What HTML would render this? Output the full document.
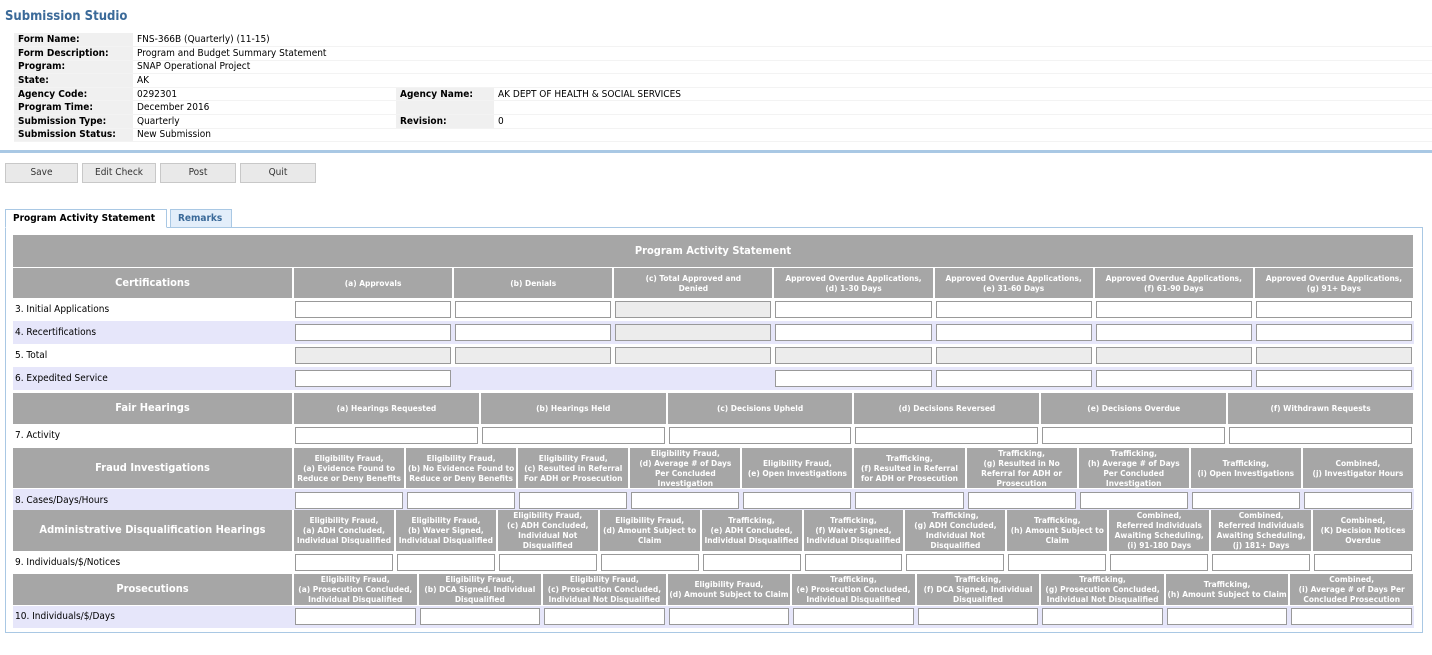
<!DOCTYPE html>
<html><head><meta charset="utf-8"><style>
*{box-sizing:border-box}
body{margin:0;width:1432px;height:655px;background:#fff;font-family:"DejaVu Sans Condensed","Liberation Sans",sans-serif;font-size:10px;color:#000;position:relative;overflow:hidden}
.title{position:absolute;left:5px;top:9px;font-size:13px;font-weight:bold;color:#3b6a99}
.info{position:absolute;left:14px;top:33px;border-collapse:collapse;table-layout:fixed;width:1418px}
.info td{height:13.6px;padding:0 4px;font-size:10px;border-bottom:1px solid #f3f3f3;white-space:nowrap;overflow:hidden}
.info td.l{background:#f0f0f0;font-weight:bold}
.rule{position:absolute;left:0;top:150px;width:1432px;height:3px;background:#a9c8e4}
.btn{position:absolute;top:163px;height:20px;background:#e9e9e9;border:1px solid #c8c8c8;font-size:10px;text-align:center;line-height:18px;color:#333}
.tab{position:absolute;top:209px;height:19px;font-weight:bold;font-size:10px;line-height:18px;padding:0 7px;white-space:nowrap}
.panel{position:absolute;left:5px;top:227px;width:1418px;height:406px;border:1px solid #a9c8e4}
table.s{position:absolute;left:13px;width:1402px;border-collapse:collapse;table-layout:fixed}
table.s th{background:#a6a6a6;color:#fff;font-weight:bold;font-size:8.3px;line-height:10px;border-right:2px solid #fff;border-bottom:1px solid #fff;padding:0 1px;text-align:center;overflow:hidden}
table.s th.big{font-size:11px}
table.s td{padding:0 1px;height:23px;border-right:2px solid transparent}
table.s td.lab{padding-left:2px;font-size:10px}
.lv td{background:#e6e6fa}
.i{height:17px;border:1px solid #999;background:#fff;width:100%}
.d{background:#ececec}
</style></head><body>
<div class="title">Submission Studio</div>
<table class="info">
<colgroup><col style="width:119px"><col style="width:263px"><col style="width:98px"><col></colgroup>
<tr><td class="l">Form Name:</td><td>FNS-366B (Quarterly) (11-15)</td><td></td><td></td></tr>
<tr><td class="l">Form Description:</td><td>Program and Budget Summary Statement</td><td></td><td></td></tr>
<tr><td class="l">Program:</td><td>SNAP Operational Project</td><td></td><td></td></tr>
<tr><td class="l">State:</td><td>AK</td><td></td><td></td></tr>
<tr><td class="l">Agency Code:</td><td>0292301</td><td class="l">Agency Name:</td><td>AK DEPT OF HEALTH &amp; SOCIAL SERVICES</td></tr>
<tr><td class="l">Program Time:</td><td>December 2016</td><td class="l"></td><td></td></tr>
<tr><td class="l">Submission Type:</td><td>Quarterly</td><td class="l">Revision:</td><td>0</td></tr>
<tr><td class="l">Submission Status:</td><td>New Submission</td><td></td><td></td></tr>
</table>
<div class="rule"></div>
<div class="btn" style="left:5px;width:73px">Save</div>
<div class="btn" style="left:82px;width:74px">Edit Check</div>
<div class="btn" style="left:160px;width:76px">Post</div>
<div class="btn" style="left:240px;width:76px">Quit</div>
<div class="panel"></div>
<div class="tab" style="left:5px;width:162px;background:#fff;border:1px solid #a9c8e4;border-bottom:1px solid #fff;z-index:2">Program Activity Statement</div>
<div class="tab" style="left:170px;width:62px;background:#e3eefa;border:1px solid #a9c8e4;color:#3b6a99">Remarks</div>

<table class="s" style="top:235px">
<colgroup><col style="width:280px"><col span="7"></colgroup>
<tr><th colspan="8" class="big" style="height:32px">Program Activity Statement</th></tr>
<tr style="height:31px"><th class="big">Certifications</th><th>(a) Approvals</th><th>(b) Denials</th><th>(c) Total Approved and<br>Denied</th><th>Approved Overdue Applications,<br>(d) 1-30 Days</th><th>Approved Overdue Applications,<br>(e) 31-60 Days</th><th>Approved Overdue Applications,<br>(f) 61-90 Days</th><th>Approved Overdue Applications,<br>(g) 91+ Days</th></tr>
<tr><td class="lab">3. Initial Applications</td><td><div class="i"></div></td><td><div class="i"></div></td><td><div class="i d"></div></td><td><div class="i"></div></td><td><div class="i"></div></td><td><div class="i"></div></td><td><div class="i"></div></td></tr>
<tr class="lv"><td class="lab">4. Recertifications</td><td><div class="i"></div></td><td><div class="i"></div></td><td><div class="i d"></div></td><td><div class="i"></div></td><td><div class="i"></div></td><td><div class="i"></div></td><td><div class="i"></div></td></tr>
<tr><td class="lab">5. Total</td><td><div class="i d"></div></td><td><div class="i d"></div></td><td><div class="i d"></div></td><td><div class="i d"></div></td><td><div class="i d"></div></td><td><div class="i d"></div></td><td><div class="i d"></div></td></tr>
<tr class="lv"><td class="lab">6. Expedited Service</td><td><div class="i"></div></td><td></td><td></td><td><div class="i"></div></td><td><div class="i"></div></td><td><div class="i"></div></td><td><div class="i"></div></td></tr>
</table>

<table class="s" style="top:393px">
<colgroup><col style="width:280px"><col span="6"></colgroup>
<tr style="height:31px"><th class="big">Fair Hearings</th><th>(a) Hearings Requested</th><th>(b) Hearings Held</th><th>(c) Decisions Upheld</th><th>(d) Decisions Reversed</th><th>(e) Decisions Overdue</th><th>(f) Withdrawn Requests</th></tr>
<tr><td class="lab">7. Activity</td><td><div class="i"></div></td><td><div class="i"></div></td><td><div class="i"></div></td><td><div class="i"></div></td><td><div class="i"></div></td><td><div class="i"></div></td></tr>
</table>

<table class="s" style="top:448px">
<colgroup><col style="width:280px"><col span="10"></colgroup>
<tr style="height:40px"><th class="big">Fraud Investigations</th><th>Eligibility Fraud,<br>(a) Evidence Found to Reduce or Deny Benefits</th><th>Eligibility Fraud,<br>(b) No Evidence Found to Reduce or Deny Benefits</th><th>Eligibility Fraud,<br>(c) Resulted in Referral For ADH or Prosecution</th><th>Eligibility Fraud,<br>(d) Average # of Days Per Concluded Investigation</th><th>Eligibility Fraud,<br>(e) Open Investigations</th><th>Trafficking,<br>(f) Resulted in Referral for ADH or Prosecution</th><th>Trafficking,<br>(g) Resulted in No Referral for ADH or Prosecution</th><th>Trafficking,<br>(h) Average # of Days Per Concluded Investigation</th><th>Trafficking,<br>(i) Open Investigations</th><th>Combined,<br>(j) Investigator Hours</th></tr>
<tr class="lv" style="height:22px"><td class="lab" style="height:22px">8. Cases/Days/Hours</td><td><div class="i"></div></td><td><div class="i"></div></td><td><div class="i"></div></td><td><div class="i"></div></td><td><div class="i"></div></td><td><div class="i"></div></td><td><div class="i"></div></td><td><div class="i"></div></td><td><div class="i"></div></td><td><div class="i"></div></td></tr>
</table>

<table class="s" style="top:510px">
<colgroup><col style="width:280px"><col span="11"></colgroup>
<tr style="height:41px"><th class="big">Administrative Disqualification Hearings</th><th>Eligibility Fraud,<br>(a) ADH Concluded, Individual Disqualified</th><th>Eligibility Fraud,<br>(b) Waver Signed, Individual Disqualified</th><th>Eligibility Fraud,<br>(c) ADH Concluded, Individual Not Disqualified</th><th>Eligibility Fraud,<br>(d) Amount Subject to Claim</th><th>Trafficking,<br>(e) ADH Concluded, Individual Disqualified</th><th>Trafficking,<br>(f) Waiver Signed, Individual Disqualified</th><th>Trafficking,<br>(g) ADH Concluded, Individual Not Disqualified</th><th>Trafficking,<br>(h) Amount Subject to Claim</th><th>Combined,<br>Referred Individuals Awaiting Scheduling, (i) 91-180 Days</th><th>Combined,<br>Referred Individuals Awaiting Scheduling, (j) 181+ Days</th><th>Combined,<br>(K) Decision Notices Overdue</th></tr>
<tr style="height:22px"><td class="lab" style="height:22px">9. Individuals/$/Notices</td><td><div class="i"></div></td><td><div class="i"></div></td><td><div class="i"></div></td><td><div class="i"></div></td><td><div class="i"></div></td><td><div class="i"></div></td><td><div class="i"></div></td><td><div class="i"></div></td><td><div class="i"></div></td><td><div class="i"></div></td><td><div class="i"></div></td></tr>
</table>

<table class="s" style="top:574px">
<colgroup><col style="width:280px"><col span="9"></colgroup>
<tr style="height:31px"><th class="big">Prosecutions</th><th>Eligibility Fraud,<br>(a) Prosecution Concluded, Individual Disqualified</th><th>Eligibility Fraud,<br>(b) DCA Signed, Individual Disqualified</th><th>Eligibility Fraud,<br>(c) Prosecution Concluded, Individual Not Disqualified</th><th>Eligibility Fraud,<br>(d) Amount Subject to Claim</th><th>Trafficking,<br>(e) Prosecution Concluded, Individual Disqualified</th><th>Trafficking,<br>(f) DCA Signed, Individual Disqualified</th><th>Trafficking,<br>(g) Prosecution Concluded, Individual Not Disqualified</th><th>Trafficking,<br>(h) Amount Subject to Claim</th><th>Combined,<br>(i) Average # of Days Per Concluded Prosecution</th></tr>
<tr class="lv"><td class="lab">10. Individuals/$/Days</td><td><div class="i"></div></td><td><div class="i"></div></td><td><div class="i"></div></td><td><div class="i"></div></td><td><div class="i"></div></td><td><div class="i"></div></td><td><div class="i"></div></td><td><div class="i"></div></td><td><div class="i"></div></td></tr>
</table>
</body></html>
